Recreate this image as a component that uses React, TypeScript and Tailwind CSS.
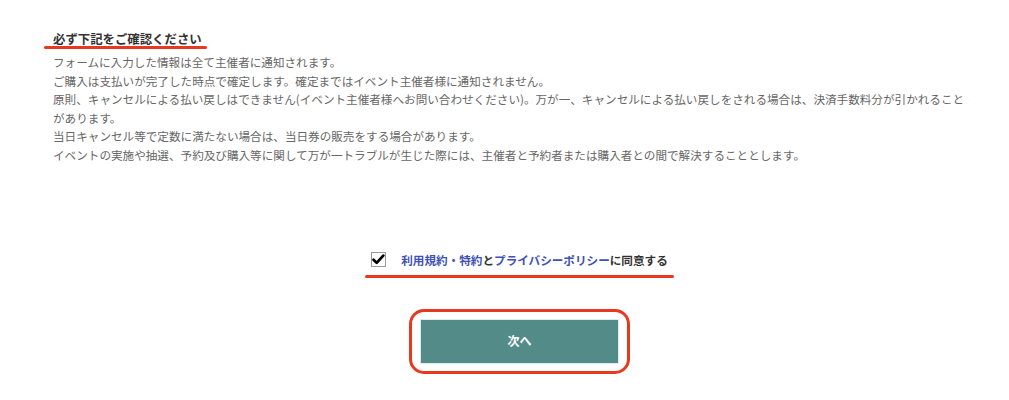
import React from "react";

const lines = [
  "フォームに入力した情報は全て主催者に通知されます。",
  "ご購入は支払いが完了した時点で確定します。確定まではイベント主催者様に通知されません。",
  "原則、キャンセルによる払い戻しはできません(イベント主催者様へお問い合わせください)。万が一、キャンセルによる払い戻しをされる場合は、決済手数料分が引かれること",
  "があります。",
  "当日キャンセル等で定数に満たない場合は、当日券の販売をする場合があります。",
  "イベントの実施や抽選、予約及び購入等に関して万が一トラブルが生じた際には、主催者と予約者または購入者との間で解決することとします。",
];

export default function App() {
  return (
    <div
      className="w-[1009px] h-[400px] bg-white pl-[30px] overflow-hidden"
      style={{ fontFamily: '"Noto Sans CJK JP", "Noto Sans", sans-serif' }}
    >
      <div className="pl-[23px] pt-[25px]">
        <div className="relative inline-block">
          <h2 className="text-[12.4px] leading-[18px] font-bold text-[#333] underline decoration-[#333] underline-offset-[2px] whitespace-nowrap">
            必ず下記をご確認ください
          </h2>
          <div className="absolute left-[-9px] right-[-5px] top-[16px] h-[3px] rounded-full bg-[#e8381f]" />
        </div>
        <div className="mt-[4px] text-[11.6px] leading-[18.6px] text-[#666] whitespace-nowrap">
          {lines.map((l, i) => (
            <p key={i}>{l}</p>
          ))}
        </div>
      </div>

      <div className="flex justify-center mt-[86px]">
        <label className="relative flex items-center gap-[15px]">
          <span className="w-[15px] h-[15px] border border-[#999] bg-white flex items-center justify-center">
            <svg width="15" height="13" viewBox="0 0 15 13">
              <path d="M1.8 6.8 L5.4 10.4 L13 2" fill="none" stroke="#000" strokeWidth="3.2" strokeLinecap="round" strokeLinejoin="round" />
            </svg>
          </span>
          <span className="text-[11.6px] leading-[18px] font-bold text-[#333] whitespace-nowrap">
            <span className="text-[#3f51b5]">利用規約・特約</span>と
            <span className="text-[#3f51b5]">プライバシーポリシー</span>に同意する
          </span>
          <div className="absolute left-[-6px] right-[-6px] top-[24px] h-[3px] rounded-full bg-[#e8381f]" />
        </label>
      </div>

      <div className="flex justify-center mt-[40px]">
        <div className="rounded-[15px] border-[3px] border-[#e8381f] px-[8px] py-[7px]">
          <button className="w-[199px] h-[45px] bg-[#538b89] text-white text-[12px] font-bold border border-[#e0ecea]">
            次へ
          </button>
        </div>
      </div>
    </div>
  );
}
